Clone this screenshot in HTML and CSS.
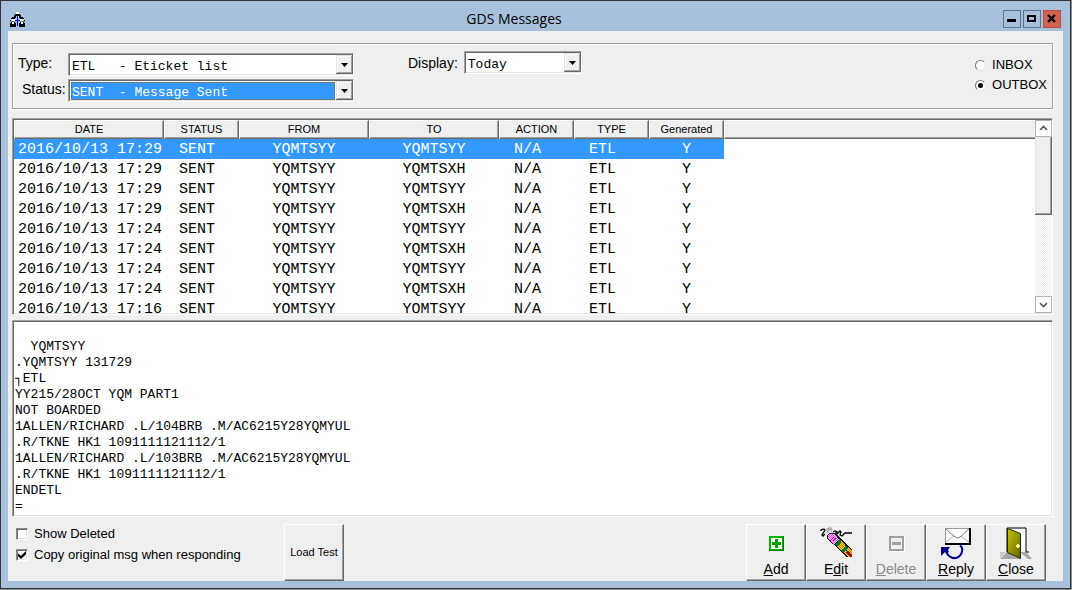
FILE: index.html
```html
<!DOCTYPE html>
<html lang="en">
<head>
<meta charset="utf-8">
<title>GDS Messages</title>
<link rel="stylesheet" href="styles.css">
</head>
<body>
<div class="window">
  <header class="titlebar">
    <svg class="app-icon" viewBox="0 0 15 15" width="15" height="15" shape-rendering="crispEdges" aria-hidden="true">
      <path d="M5 2h5v1H5zM4 3h7v1H4zM2 5h3v1H2zM10 5h3v1h-3zM1 6h4v1H1zM10 6h4v1h-4zM0 8h1v1H0zM14 8h1v1h-1zM1 10h4v1H1zM10 10h4v1h-4zM0 11h6v4H0zM9 11h6v4H9zM4 4h2v2H4zM9 4h2v2H9z" fill="#000"/>
      <path d="M6 0h3v2H6zM2 7h3v2H2zM10 7h3v2h-3zM2 10h2v2H2zM11 10h2v2h-2z" fill="#fff"/>
      <path d="M0 9h5v1H0zM10 9h5v1h-5z" fill="#777"/>
      <path d="M7 4h1v10H7zM5 8h5v1H5z" fill="#00f"/>
    </svg>
    <h1 class="title">GDS Messages</h1>
    <div class="window-buttons">
      <button class="win-btn" type="button" aria-label="Minimize"><svg width="16" height="16" shape-rendering="crispEdges"><path d="M3 8h9v3H3z"/></svg></button>
      <button class="win-btn" type="button" aria-label="Maximize"><svg width="16" height="16" shape-rendering="crispEdges"><path fill-rule="evenodd" d="M3 4h9v7H3zM5 6v3h5V6z"/></svg></button>
      <button class="win-btn win-close" type="button" aria-label="Close window"><svg width="16" height="16"><path d="M4 4l7 7M11 4l-7 7" stroke="#000" stroke-width="2.4"/></svg></button>
    </div>
  </header>

  <main class="content">
    <section class="filters">
      <div class="filter-main">
        <label for="type">Type:</label>
        <span class="combo">
          <select id="type"><option>ETL&nbsp;&nbsp; - Eticket list</option></select>
          <svg class="arrow" viewBox="0 0 17 19" aria-hidden="true"><path d="M5 8h7l-3.500 4z"/></svg>
        </span>
        <label for="status" class="indent">Status:</label>
        <span class="combo focused">
          <select id="status"><option>SENT&nbsp; - Message Sent</option></select>
          <svg class="arrow" viewBox="0 0 17 19" aria-hidden="true"><path d="M5 8h7l-3.500 4z"/></svg>
        </span>
      </div>
      <div class="filter-display">
        <label for="display">Display:</label>
        <span class="combo combo-small">
          <select id="display"><option>Today</option></select>
          <svg class="arrow" viewBox="0 0 17 19" aria-hidden="true"><path d="M5 8h7l-3.500 4z"/></svg>
        </span>
      </div>
      <div class="boxes">
        <label><input type="radio" name="box">INBOX</label>
        <label><input type="radio" name="box" checked>OUTBOX</label>
      </div>
    </section>

    <section class="list">
      <div class="list-view">
        <table>
          <colgroup><col class="c-date"><col class="c-short"><col class="c-addr"><col class="c-addr"><col class="c-short"><col class="c-short"><col class="c-short"><col></colgroup>
          <thead><tr><th>DATE</th><th>STATUS</th><th>FROM</th><th>TO</th><th>ACTION</th><th>TYPE</th><th>Generated</th><td class="rest"></td></tr></thead>
          <tbody>
            <tr class="selected"><td>2016/10/13 17:29</td><td>SENT</td><td>YQMTSYY</td><td>YQMTSYY</td><td>N/A</td><td>ETL</td><td>Y</td></tr>
            <tr><td>2016/10/13 17:29</td><td>SENT</td><td>YQMTSYY</td><td>YQMTSXH</td><td>N/A</td><td>ETL</td><td>Y</td></tr>
            <tr><td>2016/10/13 17:29</td><td>SENT</td><td>YQMTSYY</td><td>YQMTSYY</td><td>N/A</td><td>ETL</td><td>Y</td></tr>
            <tr><td>2016/10/13 17:29</td><td>SENT</td><td>YQMTSYY</td><td>YQMTSXH</td><td>N/A</td><td>ETL</td><td>Y</td></tr>
            <tr><td>2016/10/13 17:24</td><td>SENT</td><td>YQMTSYY</td><td>YQMTSYY</td><td>N/A</td><td>ETL</td><td>Y</td></tr>
            <tr><td>2016/10/13 17:24</td><td>SENT</td><td>YQMTSYY</td><td>YQMTSXH</td><td>N/A</td><td>ETL</td><td>Y</td></tr>
            <tr><td>2016/10/13 17:24</td><td>SENT</td><td>YQMTSYY</td><td>YQMTSYY</td><td>N/A</td><td>ETL</td><td>Y</td></tr>
            <tr><td>2016/10/13 17:24</td><td>SENT</td><td>YQMTSYY</td><td>YQMTSXH</td><td>N/A</td><td>ETL</td><td>Y</td></tr>
            <tr><td>2016/10/13 17:16</td><td>SENT</td><td>YQMTSYY</td><td>YQMTSYY</td><td>N/A</td><td>ETL</td><td>Y</td></tr>
          </tbody>
        </table>
      </div>
      <div class="scrollbar">
        <button type="button" class="scroll-btn" aria-label="Scroll up"><svg width="15" height="15"><path d="M4 9l3.500-3.500L11 9" fill="none" stroke="#555" stroke-width="1.600"/></svg></button>
        <div class="track"><div class="thumb"></div></div>
        <button type="button" class="scroll-btn" aria-label="Scroll down"><svg width="15" height="15"><path d="M4 6l3.500 3.500L11 6" fill="none" stroke="#555" stroke-width="1.600"/></svg></button>
      </div>
    </section>

    <textarea class="message" readonly aria-label="Message text" spellcheck="false">

  YQMTSYY
.YQMTSYY 131729
┐ETL
YY215/28OCT YQM PART1
NOT BOARDED
1ALLEN/RICHARD .L/104BRB .M/AC6215Y28YQMYUL
.R/TKNE HK1 1091111121112/1
1ALLEN/RICHARD .L/103BRB .M/AC6215Y28YQMYUL
.R/TKNE HK1 1091111121112/1
ENDETL
=</textarea>

    <footer class="footer">
      <div class="checks">
        <label><input type="checkbox">Show Deleted</label>
        <label><input type="checkbox" checked>Copy original msg when responding</label>
      </div>
      <button type="button" class="tool small">Load Test</button>
      <div class="tools">
        <button type="button" class="tool">
          <svg width="32" height="32" shape-rendering="crispEdges" aria-hidden="true">
            <path d="M9 9h15v15H9z" fill="#007a00"/><path d="M9 9h14v14H9z" fill="#00b400"/><path d="M11 11h11v11H11z" fill="#f4fff4"/>
            <path d="M15 12h3v3h3v3h-3v3h-3v-3h-3v-3h3z" fill="#00a000"/>
          </svg>
          <span><u>A</u>dd</span>
        </button>
        <button type="button" class="tool">
          <svg width="32" height="32" aria-hidden="true">
            <defs>
              <pattern id="pink" width="2" height="2" patternUnits="userSpaceOnUse"><path d="M0 0h2v2H0z" fill="#ff40ff"/><path d="M0 0h1v1H0zM1 1h1v1H1z" fill="#ffc8ff"/></pattern>
              <pattern id="wood" width="2" height="2" patternUnits="userSpaceOnUse"><path d="M0 0h2v2H0z" fill="#ffd800"/><path d="M0 0h1v1H0zM1 1h1v1H1z" fill="#c87800"/></pattern>
              <clipPath id="frame"><path d="M0 0h32v30H0z"/></clipPath>
            </defs>
            <g fill="none" stroke-width="1.300">
              <path d="M1 4V3L4 2L5 3L2 8L3 9L5 7" stroke="#000"/>
              <path d="M6 3L9 1L7 6L11 1L12 3L11 5" stroke="#aaa"/>
              <path d="M13 5L15 4L17 5L15 7L16 8L20 4L21 5L20 8L22 9L25 6H32" stroke="#000"/>
            </g>
            <g clip-path="url(#frame)" shape-rendering="crispEdges">
              <path d="M9 6h5l3 2 16 16v7h-5L13 17l-4-3-2-3V8z" fill="#111"/>
              <path d="M9 7h5l3 3 2 3-5 4-3-2-3-4V8z" fill="url(#pink)"/>
              <path d="M10 14l4-4M13 14l3-3" stroke="#a000a0"/>
              <path d="M19 12l2 2c0 3-2 5-5 5l-2-2c3 0 4-2 5-5z" fill="#007838"/>
              <path d="M21 14l4 4c0 3-2 5-5 5l-4-4c3 0 5-2 5-5z" fill="url(#wood)"/>
              <path d="M25 18l3 2c0 3-2 5-5 5l-3-2c3 0 5-2 5-5z" fill="#007838"/>
              <path d="M28 20l4 4v6h-4l-5-5c3 0 5-2 5-5z" fill="url(#wood)"/>
              <path d="M25 25l3-1 4 4v2h-2z" fill="#981000"/>
            </g>
          </svg>
          <span>E<u>d</u>it</span>
        </button>
        <button type="button" class="tool" disabled>
          <svg width="32" height="32" shape-rendering="crispEdges" aria-hidden="true">
            <path d="M10 10h15v15H10z" fill="#fff"/><path fill-rule="evenodd" d="M9 9h15v15H9zM11 11v11h11V11z" fill="#a0a0a0"/><path d="M11 11h11v11H11z" fill="#efefef"/><path d="M12 15h9v3h-9z" fill="#a0a0a0"/>
          </svg>
          <span><u>D</u>elete</span>
        </button>
        <button type="button" class="tool">
          <svg width="32" height="32" aria-hidden="true">
            <path d="M5 1h26v17H5z"/><path d="M5 1h24v15H5z" fill="#999"/><path d="M6 2h23v14H6z" fill="#fff"/>
            <path d="M6 15l8-6M29 15l-8-6" fill="none" stroke="#aaa"/><path d="M6 2l9 8q2.500 2 5 0l9-8" fill="none" stroke="#777"/>
            <path d="M20 18.500q3 2 2 6q-1 5-6 6.500q-6 1-10-6" fill="none" stroke="#000090" stroke-width="2"/>
            <path d="M1 20h9l-2 3 1 2-2 1-2-1-4 4z" fill="#000090"/>
          </svg>
          <span><u>R</u>eply</span>
        </button>
        <button type="button" class="tool">
          <svg width="32" height="32" aria-hidden="true">
            <defs><linearGradient id="door" x2="0.900" y2="1"><stop offset="0" stop-color="#c8c800"/><stop offset="1" stop-color="#686800"/></linearGradient></defs>
            <path d="M7 25v7H0zM7 25l13 7H7z" fill="#a6a6a6"/><path d="M26 25l6 7h-4l-8-7z" fill="#a6a6a6"/><path d="M0 25h7L0 31z" fill="#ccc"/>
            <path d="M8 2h17v23H8z" fill="#fff"/><path d="M7 25V1h19v24M26 25h3" fill="none" stroke="#000"/>
            <path d="M7.500 1.500l13 5v25l-13-6z" fill="url(#door)" stroke="#222200"/>
            <path d="M16 19h4M18 17v4" stroke="#ffffa0" stroke-width="2"/>
          </svg>
          <span><u>C</u>lose</span>
        </button>
      </div>
    </footer>
  </main>
</div>
</body>
</html>
```
FILE: styles.css
```css
* { box-sizing: border-box; }

body {
  margin: 0;
  height: 100vh;
  padding: 0 1px 1px 0;
  background: #8a8a8a;
  font: 14px/16px "Liberation Sans", Arial, sans-serif;
  color: #000;
}

button, select, textarea { font: inherit; color: inherit; margin: 0; border-radius: 0; }

.window {
  height: 100%;
  display: flex;
  flex-direction: column;
  border: 1px solid #333;
  padding: 0 7px 7px;
  background: #a7c0dc;
}

.titlebar {
  flex: none;
  height: 30px;
  display: flex;
  align-items: center;
  padding: 6px 2px 0;
}

.title { flex: 1; margin: 0; text-align: center; font: 14px/20px "Open Sans", "Noto Sans", sans-serif; }

.window-buttons { display: flex; gap: 2px; }

.win-btn {
  width: 18px;
  height: 18px;
  padding: 0;
  border: 1px solid #5d7190;
  background: transparent;
}
.win-btn svg { display: block; }
.win-close { background: #cf6350; border-color: #b8503f; }

.content {
  flex: 1;
  min-height: 0;
  display: flex;
  flex-direction: column;
  padding: 12px 10px 0 4px;
  background: #efefef;
}

.filters {
  flex: none;
  display: flex;
  align-items: flex-start;
  margin-bottom: 9px;
  padding: 6px 4px 6px 4px;
  border: 1px solid #a0a0a0;
  box-shadow: inset 1px 1px #fff, 1px 1px #fff;
}

.filter-main {
  display: grid;
  grid-template-columns: 45px 286px;
  column-gap: 5px;
  row-gap: 3px;
  padding: 3px 0 0 1px;
  line-height: 20px;
}
.indent { padding-left: 4px; }

.filter-display { display: flex; align-items: center; gap: 6px; margin-left: 54px; padding-top: 1px; }

.combo {
  position: relative;
  display: flex;
  height: 23px;
  border: 1px solid;
  border-color: #a0a0a0 #fff #fff #a0a0a0;
  box-shadow: inset 1px 1px #696969, inset -1px -1px #e3e3e3;
  padding: 2px 1px 1px 2px;
  background: #fff;
}
.combo-small { width: 118px; }

.combo select {
  appearance: none;
  flex: 1;
  min-width: 0;
  border: 0;
  padding: 2px 18px 0 1px;
  background: none;
  font: 13px/18px "Liberation Mono", "Courier New", monospace;
}
.focused select {
  margin-right: 17px;
  padding-right: 0;
  background: #3399ff;
  color: #fff;
  outline: 1px dotted #b05a00;
  outline-offset: -1px;
}

.arrow {
  position: absolute;
  top: 1px;
  right: 0;
  width: 17px;
  height: 19px;
  pointer-events: none;
  background: #efefef;
  box-shadow: inset -1px -1px #696969, inset 1px 1px #e3e3e3, inset -2px -2px #a0a0a0, inset 2px 2px #fff;
}

.boxes { margin: 5px 1px 0 auto; font-size: 13px; line-height: 20px; }
.boxes label { display: flex; align-items: center; gap: 6px; }

input { appearance: none; margin: 0; flex: none; background: #fff; display: grid; place-items: center; }

input[type="radio"] {
  width: 11px;
  height: 11px;
  border: 1px solid;
  border-color: #777 #e3e3e3 #e3e3e3 #777;
  border-radius: 50%;
}
input[type="radio"]:checked::before { content: ""; width: 5px; height: 5px; border-radius: 50%; background: #000; }

input[type="checkbox"] {
  width: 12px;
  height: 12px;
  border: 1px solid;
  border-color: #888 #fff #fff #888;
  box-shadow: inset 1px 1px #696969, inset -1px -1px #e3e3e3;
}
input[type="checkbox"]:checked::before {
  content: "";
  width: 8px;
  height: 8px;
  background: #000;
  clip-path: polygon(0 30%, 38% 60%, 100% 0, 100% 40%, 38% 100%, 0 65%);
}

.list, .message {
  flex: 1 1 0;
  min-height: 0;
  border: 1px solid;
  border-color: #a0a0a0 #fff #fff #a0a0a0;
  background: #fff;
}

.list { display: flex; margin-bottom: 5px; padding: 1px 0 1px 1px; box-shadow: inset 1px 1px #696969, inset -1px -1px #e3e3e3; }

.list-view { flex: 1; min-width: 0; overflow: hidden; }

table { width: 100%; table-layout: fixed; border-collapse: separate; border-spacing: 0; }
.c-date { width: 150px; }
.c-short { width: 75px; }
.c-addr { width: 130px; }

th, .rest {
  height: 19px;
  padding: 0;
  background: #efefef;
  border: 1px solid;
  border-color: #fff #696969 #696969 #fff;
  box-shadow: inset -1px -1px #a0a0a0;
  font-size: 11px;
  line-height: 16px;
  font-weight: normal;
  vertical-align: top;
}
.rest { border-right: 0; box-shadow: inset 0 -1px #a0a0a0; }

tbody td {
  height: 20px;
  padding: 2px 0 0;
  font: 15px/18px "Liberation Mono", "Courier New", monospace;
  text-align: center;
  white-space: nowrap;
}
tbody td:nth-child(1) { padding-left: 4px; text-align: left; }
tbody td:nth-child(2), tbody td:nth-child(5), tbody td:nth-child(6) { padding-left: 15px; text-align: left; }
.selected td { background: #3399ff; color: #fff; }

.scrollbar { flex: none; width: 17px; display: flex; flex-direction: column; }
.scroll-btn { height: 17px; padding: 0; border: 1px solid #b4b4b4; background: #fff; }
.scroll-btn svg { display: block; }
.track {
  flex: 1;
  background: repeating-conic-gradient(#ececec 0 25%, #fff 0 50%) 0 0 / 2px 2px;
}
.thumb {
  height: 49%;
  background: #efefef;
  box-shadow: inset -1px -1px #696969, inset 1px 1px #e3e3e3, inset -2px -2px #a0a0a0;
}

.message {
  width: 100%;
  padding: 2px 2px 0;
  resize: none;
  outline: 0;
  overflow: hidden;
  box-shadow: inset 1px 1px #696969, inset -1px -1px #e3e3e3;
  font: 13px/16px "Liberation Mono", "Courier New", monospace;
}

.footer { flex: none; display: flex; padding: 7px 7px 0 4px; }

.checks { width: 268px; padding-top: 2px; display: flex; flex-direction: column; gap: 5px; font-size: 13px; }
.checks label { display: flex; align-items: center; gap: 6px; white-space: nowrap; }

.tools { display: flex; margin-left: auto; }

.tool {
  width: 60px;
  height: 57px;
  display: flex;
  flex-direction: column;
  align-items: center;
  justify-content: center;
  gap: 2px;
  padding: 0 0 1px;
  border: 1px solid;
  border-color: #fff #696969 #696969 #fff;
  box-shadow: inset -1px -1px #a0a0a0;
  background: #efefef;
  white-space: nowrap;
}
.tool svg { display: block; overflow: visible; }
.tool:disabled { color: #8a8a8a; }
.small { font-size: 11px; }
```
